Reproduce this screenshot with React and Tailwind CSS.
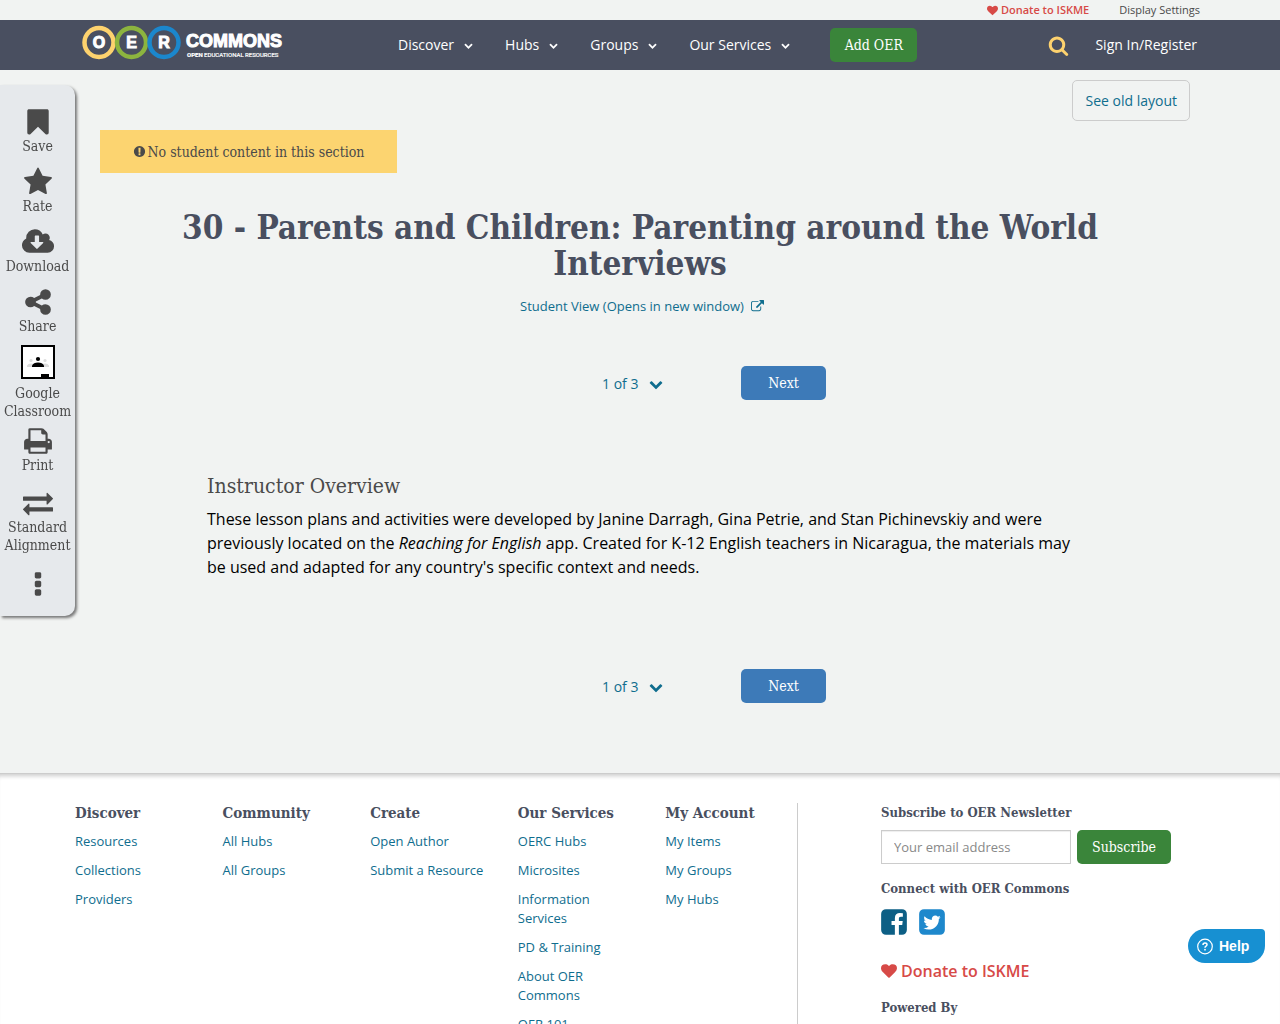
import { useState } from "react";

const icons = {
    heart: "M896 1664q-26 0-44-18l-624-602q-10-8-27.5-26t-55.5-65.5-68-97.5-53.5-121-23.5-138q0-220 127-344t351-124q62 0 126.5 21.5t120 58 95.5 68.5 76 68q36-36 76-68t95.5-68.5 120-58 126.5-21.5q224 0 351 124t127 344q0 221-229 450l-623 600q-18 18-44 18z",
    chevron: "M1683 808l-742 741q-19 19-45 19t-45-19l-742-741q-19-19-19-45.5t19-45.5l166-165q19-19 45-19t45 19l531 531 531-531q19-19 45-19t45 19l166 165q19 19 19 45.5t-19 45.5z",
    search: "M1216 832q0-185-131.5-316.5t-316.5-131.5-316.5 131.5-131.5 316.5 131.5 316.5 316.5 131.5 316.5-131.5 131.5-316.5zm512 832q0 52-38 90t-90 38q-54 0-90-38l-343-342q-179 124-399 124-143 0-273.5-55.5t-225-150-150-225-55.5-273.5 55.5-273.5 150-225 225-150 273.5-55.5 273.5 55.5 225 150 150 225 55.5 273.5q0 220-124 399l343 343q37 37 37 90z",
    bookmark: "M1420 128q23 0 44 9 33 13 52.5 41t19.5 62v1289q0 34-19.5 62t-52.5 41q-19 8-44 8-48 0-83-32l-441-424-441 424q-36 33-83 33-23 0-44-9-33-13-52.5-41t-19.5-62v-1289q0-34 19.5-62t52.5-41q21-9 44-9h1048z",
    star: "M1728 647q0 22-26 48l-363 354 86 500q1 7 1 20 0 21-10.5 35.5t-30.5 14.5q-19 0-40-12l-449-236-449 236q-22 12-40 12-21 0-31.5-14.5t-10.5-35.5q0-6 2-20l86-500-364-354q-25-27-25-48 0-37 56-46l502-73 225-455q19-41 49-41t49 41l225 455 502 73q56 9 56 46z",
    download: "M1216 928q0-14-9-23t-23-9h-224v-352q0-13-9.5-22.5t-22.5-9.5h-192q-13 0-22.5 9.5t-9.5 22.5v352h-224q-13 0-22.5 9.5t-9.5 22.5q0 14 9 23l352 352q9 9 23 9t23-9l351-351q10-12 10-24zm640 224q0 159-112.5 271.5t-271.5 112.5h-1088q-185 0-316.5-131.5t-131.5-316.5q0-130 70-240t188-165q-2-30-2-43 0-212 150-362t362-150q156 0 285.5 87t188.5 231q71-62 166-62 106 0 181 75t75 181q0 76-41 138 130 31 213.5 135.5t83.5 238.5z",
    share: "M1344 1024q133 0 226.5 93.5t93.5 226.5-93.5 226.5-226.5 93.5-226.5-93.5-93.5-226.5q0-12 2-34l-360-180q-92 86-218 86-133 0-226.5-93.5t-93.5-226.5 93.5-226.5 226.5-93.5q126 0 218 86l360-180q-2-22-2-34 0-133 93.5-226.5t226.5-93.5 226.5 93.5 93.5 226.5-93.5 226.5-226.5 93.5q-126 0-218-86l-360 180q2 22 2 34t-2 34l360 180q92-86 218-86z",
    print: "M448 1536h896v-256h-896v256zm0-640h896v-384h-160q-40 0-68-28t-28-68v-160h-640v640zm1152 64q0-26-19-45t-45-19-45 19-19 45 19 45 45 19 45-19 19-45zm128 0v416q0 13-9.5 22.5t-22.5 9.5h-224v160q0 40-28 68t-68 28h-960q-40 0-68-28t-28-68v-160h-224q-13 0-22.5-9.5t-9.5-22.5v-416q0-79 56.5-135.5t135.5-56.5h64v-544q0-40 28-68t68-28h672q40 0 88 20t76 48l152 152q28 28 48 76t20 88v256h64q79 0 135.5 56.5t56.5 135.5z",
    exchange: "M1792 1184v192q0 13-9.5 22.5t-22.5 9.5h-1376v192q0 13-9.5 22.5t-22.5 9.5q-12 0-24-10l-319-320q-9-9-9-22 0-14 9-23l320-320q9-9 23-9 13 0 22.5 9.5t9.5 22.5v192h1376q13 0 22.5 9.5t9.5 22.5zm0-544q0 14-9 23l-320 320q-9 9-23 9-13 0-22.5-9.5t-9.5-22.5v-192h-1376q-13 0-22.5-9.5t-9.5-22.5v-192q0-13 9.5-22.5t22.5-9.5h1376v-192q0-14 9-23t23-9q12 0 24 10l319 319q9 9 9 23z",
    ellipsis: "M1088 1248v192q0 40-28 68t-68 28h-192q-40 0-68-28t-28-68v-192q0-40 28-68t68-28h192q40 0 68 28t28 68zm0-512v192q0 40-28 68t-68 28h-192q-40 0-68-28t-28-68v-192q0-40 28-68t68-28h192q40 0 68 28t28 68zm0-512v192q0 40-28 68t-68 28h-192q-40 0-68-28t-28-68v-192q0-40 28-68t68-28h192q40 0 68 28t28 68z",
    alert: "M896 128q209 0 385.5 103t279.5 279.5 103 385.5-103 385.5-279.5 279.5-385.5 103-385.5-103-279.5-279.5-103-385.5 103-385.5 279.5-279.5 385.5-103zm128 1247v-190q0-14-9-23.5t-22-9.5h-192q-13 0-23 10t-10 23v190q0 13 10 23t23 10h192q13 0 22-9.5t9-23.5zm-2-344l18-621q0-12-10-18-10-8-24-8h-220q-14 0-24 8-10 6-10 18l17 621q0 10 10 17.5t24 7.5h185q14 0 23.5-7.5t10.5-17.5z",
    external: "M1408 928v320q0 119-84.5 203.5t-203.5 84.5h-832q-119 0-203.5-84.5t-84.5-203.5v-832q0-119 84.5-203.5t203.5-84.5h704q14 0 23 9t9 23v64q0 14-9 23t-23 9h-704q-66 0-113 47t-47 113v832q0 66 47 113t113 47h832q66 0 113-47t47-113v-320q0-14 9-23t23-9h64q14 0 23 9t9 23zm384-864v512q0 26-19 45t-45 19-45-19l-176-176-652 652q-10 10-23 10t-23-10l-114-114q-10-10-10-23t10-23l652-652-176-176q-19-19-19-45t19-45 45-19h512q26 0 45 19t19 45z",
    facebook: "M1376 128q119 0 203.5 84.5t84.5 203.5v960q0 119-84.5 203.5t-203.5 84.5h-188v-595h199l30-232h-229v-148q0-56 23.5-84t91.5-28l122-1v-207q-63-9-178-9-136 0-217.5 80t-81.5 226v171h-200v232h200v595h-532q-119 0-203.5-84.5t-84.5-203.5v-960q0-119 84.5-203.5t203.5-84.5h960z",
    twitter: "M1408 610q-56 25-121 34 68-40 93-117-65 38-134 51-61-66-153-66-87 0-148.5 61.5t-61.5 148.5q0 29 5 48-129-7-242-65t-192-155q-29 50-29 106 0 114 91 175-47-1-100-26v2q0 75 50 133.5t123 72.5q-29 8-51 8-13 0-39-4 21 63 74.5 104t121.5 42q-116 90-261 90-26 0-50-3 148 94 322 94 112 0 210-35.5t168-95 120.5-137 75-162 24.5-168.5q0-18-1-27 63-45 105-109zm256-194v960q0 119-84.5 203.5t-203.5 84.5h-960q-119 0-203.5-84.5t-84.5-203.5v-960q0-119 84.5-203.5t203.5-84.5h960q119 0 203.5 84.5t84.5 203.5z",
};

const navItems = ["Discover", "Hubs", "Groups", "Our Services"];

const tools = [
    { icon: "bookmark", label: "Save", spacing: "pb-3" },
    { icon: "star", label: "Rate", spacing: "pb-3" },
    { icon: "download", label: "Download", spacing: "pb-3" },
    { icon: "share", label: "Share", spacing: "pb-2.5" },
    { icon: "classroom", label: "Google Classroom", spacing: "pb-1.5" },
    { icon: "print", label: "Print", spacing: "pb-3.5" },
    { icon: "exchange", label: "Standard Alignment", spacing: "pb-4" },
];

const footerColumns = [
    { title: "Discover", links: ["Resources", "Collections", "Providers"] },
    { title: "Community", links: ["All Hubs", "All Groups"] },
    { title: "Create", links: ["Open Author", "Submit a Resource"] },
    {
        title: "Our Services",
        links: ["OERC Hubs", "Microsites", "Information Services", "PD & Training", "About OER Commons", "OER 101"],
    },
    { title: "My Account", links: ["My Items", "My Groups", "My Hubs"] },
];

function Icon({ name, className }) {
    return (
        <svg viewBox="0 0 1792 1792" fill="currentColor" aria-hidden="true" className={`shrink-0 overflow-visible ${className}`}>
            <path d={icons[name]} />
        </svg>
    );
}

function ClassroomIcon() {
    return (
        <svg viewBox="0 0 34 34" aria-hidden="true" className="mb-[5px] size-[34px]">
            <rect width="34" height="34" fill="#000" />
            <rect x="2" y="2" width="30" height="30" fill="#fff" />
            <g fill="#ddd">
                <circle cx="10" cy="15.5" r="1.6" />
                <circle cx="24" cy="15.5" r="1.6" />
                <path d="M6 22v-1.5q1-2 4-2t4 2v1.5zM20 22v-1.5q1-2 4-2t4 2v1.5z" />
            </g>
            <circle cx="17" cy="14" r="2.1" />
            <path d="M11 22v-1.5q1.5-3 6-3t6 3v1.5z" />
            <rect x="20" y="29" width="8" height="3" />
        </svg>
    );
}

function Logo() {
    return (
        <svg viewBox="0 0 206 38" className="h-[38px] w-[206px]" role="img" aria-label="OER Commons">
            <g fill="none" strokeWidth="4.5">
                <circle cx="19" cy="18.5" r="14.5" stroke="#fdd26e" />
                <circle cx="51.5" cy="18.5" r="14.5" stroke="#8cb43f" />
                <circle cx="84" cy="18.5" r="14.5" stroke="#1b87cd" />
            </g>
            <g fill="#fff" stroke="#fff" fontFamily="Liberation Sans, sans-serif" fontWeight="700">
                <g fontSize="16" strokeWidth="1" textAnchor="middle">
                    <text x="19" y="24">O</text>
                    <text x="51.5" y="24">E</text>
                    <text x="84" y="24">R</text>
                </g>
                <text x="106" y="23" fontSize="18" strokeWidth="1">COMMONS</text>
                <text x="107" y="33" fontSize="6" strokeWidth="0.2" fontFamily="Roboto, sans-serif">
                    OPEN <tspan fontWeight="400">EDUCATIONAL RESOURCES</tspan>
                </text>
            </g>
        </svg>
    );
}

function Pager() {
    return (
        <div className="flex items-center justify-center pl-[148px]">
            <button className="flex w-[139px] items-center gap-[11px] pt-px text-sm text-[#0f6d8e]">
                1 of 3
                <Icon name="chevron" className="size-3.5" />
            </button>
            <a href="#next" className="flex h-[34px] w-[85px] items-center justify-center rounded-[5px] bg-[#3d7ab8] font-['DejaVu_Serif_Condensed','DejaVu_Serif',serif] text-sm text-white">
                Next
            </a>
        </div>
    );
}

export default function App() {
    const [email, setEmail] = useState("");

    return (
        <div className="min-h-screen bg-[#f1f3f2] font-['Open_Sans',sans-serif] text-[#4a4a4a]">
            <div className="flex h-5 items-center justify-end gap-[30px] px-20 text-[11px]">
                <a href="#donate" className="flex items-center gap-[3px] font-semibold text-[#d74a47]">
                    <Icon name="heart" className="size-[11px]" />
                    Donate to ISKME
                </a>
                <a href="#settings">Display Settings</a>
            </div>

            <header className="flex h-[50px] items-center bg-[#494f60] pr-[83px] pl-20 text-sm text-white">
                <a href="#home" className="mr-28 -mt-1">
                    <Logo />
                </a>
                <nav className="flex items-center gap-8">
                    {navItems.map((item) => (
                        <button key={item} className="flex items-center gap-2.5">
                            {item}
                            <Icon name="chevron" className="size-[9px]" />
                        </button>
                    ))}
                </nav>
                <a href="#add" className="ml-10 flex h-[34px] w-[87px] items-center justify-center rounded-[5px] bg-[#3a853a] font-['DejaVu_Serif_Condensed','DejaVu_Serif',serif] text-sm">
                    Add OER
                </a>
                <button aria-label="Search" className="ml-auto text-[#fdd26e]">
                    <Icon name="search" className="size-[21px]" />
                </button>
                <a href="#signin" className="ml-[26px]">Sign In/Register</a>
            </header>

            <aside className="fixed top-[85px] left-0 flex w-[75px] flex-col items-center rounded-r-[10px] bg-[#e6e9ec] pt-[22px] pb-4 shadow-[2px_2px_3px_#777]">
                {tools.map((tool) => (
                    <button
                        key={tool.label}
                        className={`flex flex-col items-center font-['DejaVu_Serif_Condensed','DejaVu_Serif',serif] text-sm leading-[18px] ${tool.spacing}`}
                    >
                        {tool.icon === "classroom" ? <ClassroomIcon /> : <Icon name={tool.icon} className="size-[30px]" />}
                        <span className="w-[75px]">{tool.label}</span>
                    </button>
                ))}
                <button aria-label="More">
                    <Icon name="ellipsis" className="size-[30px]" />
                </button>
            </aside>

            <main className="px-[90px] pt-2.5 pb-[70px]">
                <div className="flex justify-end">
                    <a href="#old" className="flex h-[41px] items-center rounded-[5px] border border-[#ccc] px-3 text-sm text-[#0f6d8e]">
                        See old layout
                    </a>
                </div>

                <div className="mt-[9px] ml-2.5 flex h-[43px] w-[297px] items-center justify-center gap-0.5 bg-[#fcd470] font-['DejaVu_Serif_Condensed','DejaVu_Serif',serif] text-sm">
                    <Icon name="alert" className="size-[13px]" />
                    No student content in this section
                </div>

                <h1 className="mx-auto mt-[37px] max-w-[950px] text-center font-['DejaVu_Serif_Condensed','DejaVu_Serif',serif] text-[33px] leading-9 font-bold text-[#494f60]">
                    30 - Parents and Children: Parenting around the World Interviews
                </h1>
                <a href="#student" className="mx-auto mt-[15px] flex w-fit items-center gap-[7px] pl-1 text-[13px] leading-[19px] text-[#0f6d8e]">
                    Student View (Opens in new window)
                    <Icon name="external" className="size-[13px]" />
                </a>

                <div className="mt-[50px]">
                    <Pager />
                </div>

                <section className="mx-auto mt-[72px] max-w-[866px]">
                    <h2 className="font-['DejaVu_Serif_Condensed','DejaVu_Serif',serif] text-[21px] leading-7">Instructor Overview</h2>
                    <p className="mt-[7px] text-base leading-6 text-black">
                        These lesson plans and activities were developed by Janine Darragh, Gina Petrie, and Stan Pichinevskiy and were previously located on the <em>Reaching for English</em> app. Created for K-12 English teachers in Nicaragua, the materials may be used and adapted for any country's specific context and needs.
                    </p>
                </section>

                <div className="mt-[90px]">
                    <Pager />
                </div>
            </main>

            <footer className="flex border-t border-[#ccc] bg-white px-[75px] pt-[29px] shadow-[inset_0_5px_4px_-3px_#ccc]">
                <div className="grid flex-1 grid-cols-[repeat(4,148fr)_132fr] border-r border-[#ccc]">
                    {footerColumns.map((col) => (
                        <div key={col.title}>
                            <h3 className="mb-[9px] font-['DejaVu_Serif_Condensed','DejaVu_Serif',serif] text-[15px] leading-5 font-bold whitespace-nowrap text-[#494f60]">
                                {col.title}
                            </h3>
                            <ul className="flex flex-col gap-2.5 pr-6 text-[13px] leading-[19px] text-[#0f6d8e]">
                                {col.links.map((link) => (
                                    <li key={link}>
                                        <a href="#footer">{link}</a>
                                    </li>
                                ))}
                            </ul>
                        </div>
                    ))}
                </div>

                <div className="ml-[83px] w-[324px] pt-px font-['DejaVu_Serif_Condensed','DejaVu_Serif',serif] text-[13px] leading-[18px] text-[#494f60]">
                    <form onSubmit={(e) => e.preventDefault()}>
                        <label htmlFor="email" className="font-bold">Subscribe to OER Newsletter</label>
                        <div className="mt-2 flex gap-1.5">
                            <input
                                id="email"
                                type="email"
                                value={email}
                                onChange={(e) => setEmail(e.target.value)}
                                placeholder="Your email address"
                                className="h-[34px] w-[190px] border border-[#ccc] bg-white px-3 font-['Open_Sans',sans-serif] shadow-[inset_0_1px_1px_#eee] placeholder:text-[#888]"
                            />
                            <button className="h-[34px] w-[94px] rounded-[5px] bg-[#3a853a] text-sm text-white">Subscribe</button>
                        </div>
                    </form>
                    <h3 className="mt-4 font-bold">Connect with OER Commons</h3>
                    <div className="mt-[9px] -ml-0.5 flex gap-2">
                        <a href="#facebook" aria-label="Facebook" className="text-[#0d5f85]">
                            <Icon name="facebook" className="size-[30px]" />
                        </a>
                        <a href="#twitter" aria-label="Twitter" className="text-[#1e88cc]">
                            <Icon name="twitter" className="size-[30px]" />
                        </a>
                    </div>
                    <a href="#donate" className="mt-[22px] flex items-center gap-1 font-['Open_Sans',sans-serif] text-base leading-6 font-semibold text-[#d74a47]">
                        <Icon name="heart" className="size-4" />
                        Donate to ISKME
                    </a>
                    <h3 className="mt-4 font-bold">Powered By</h3>
                </div>
            </footer>

            <button className="fixed top-[929px] right-[15px] flex h-[34px] w-[77px] items-center gap-1.5 rounded-[17px] rounded-tr-[4px] bg-[#1790d2] pl-[9px] font-['Liberation_Sans',sans-serif] text-sm font-bold text-white">
                <svg viewBox="0 0 16 16" aria-hidden="true" className="size-4 overflow-visible" fill="none" stroke="currentColor">
                    <circle cx="8" cy="8.5" r="7.3" strokeWidth="1.2" />
                    <path d="M6 7q0-2 2-2t2 1.7q0 .8-1 1.500T8 9.7" strokeWidth="1.5" />
                    <circle cx="8" cy="11.7" r="0.9" fill="currentColor" stroke="none" />
                </svg>
                Help
            </button>
        </div>
    );
}
